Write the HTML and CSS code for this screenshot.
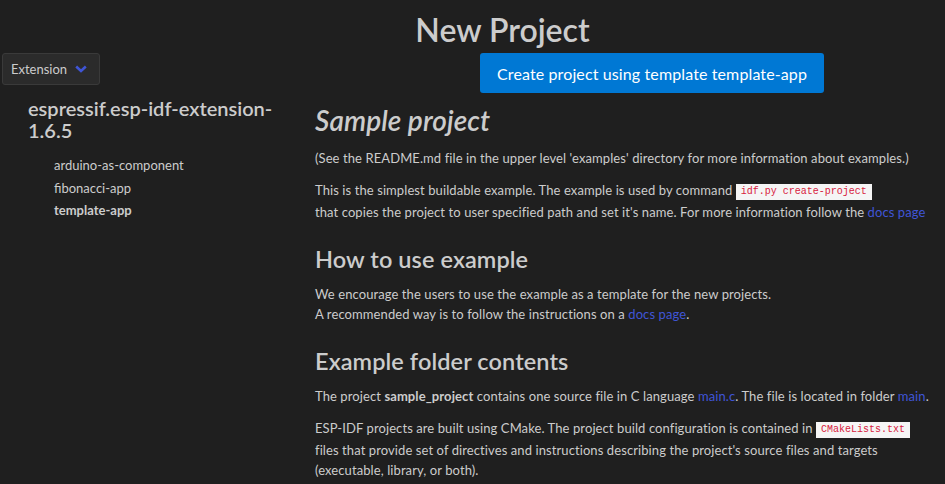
FILE: index.html
```html
<!DOCTYPE html>
<html lang="en">
<head>
<meta charset="utf-8">
<title>New Project</title>
<link rel="stylesheet" href="styles.css">
</head>
<body>
<h1 class="title">New Project</h1>
<div class="layout">
  <aside class="sidebar">
    <button class="dropdown"><span>Extension</span>
      <svg class="chev" width="12" height="8" viewBox="0 0 12 8"><path d="M1.2 1.5 L6 6 L10.8 1.5" fill="none" stroke="#3f55d6" stroke-width="2.6"/></svg>
    </button>
    <h2 class="ext-name">espressif.esp-idf-extension-1.6.5</h2>
    <ul class="templates">
      <li>arduino-as-component</li>
      <li>fibonacci-app</li>
      <li class="active">template-app</li>
    </ul>
  </aside>
  <main class="content">
    <div class="actions">
      <button class="create">Create project using template template-app</button>
    </div>
    <h2 class="sample">Sample project</h2>
    <p>(See the README.md file in the upper level 'examples' directory for more information about examples.)</p>
    <p>This is the simplest buildable example. The example is used by command <code>idf.py create-project</code><br>that copies the project to user specified path and set it's name. For more information follow the <a href="#">docs page</a></p>
    <h3>How to use example</h3>
    <p>We encourage the users to use the example as a template for the new projects.<br>A recommended way is to follow the instructions on a <a href="#">docs page</a>.</p>
    <h3>Example folder contents</h3>
    <p>The project <strong>sample_project</strong> contains one source file in C language <a href="#">main.c</a>. The file is located in folder <a href="#">main</a>.</p>
    <p>ESP-IDF projects are built using CMake. The project build configuration is contained in <code>CMakeLists.txt</code><br>files that provide set of directives and instructions describing the project's source files and targets<br>(executable, library, or both).</p>
  </main>
</div>
</body>
</html>
```

FILE: styles.css
```css
html, body {
  margin: 0;
  padding: 0;
  background: #1f1f1f;
  color: #cccccc;
  font-family: "Lato", "Open Sans", sans-serif;
  font-size: 13px;
  overflow: hidden;
}

.title {
  margin: 0;
  padding: 8px 0 0 60px;
  height: 45px;
  box-sizing: border-box;
  text-align: center;
  font-size: 32px;
  font-weight: 600;
  line-height: 44px;
  color: #cccccc;
}

.layout {
  display: grid;
  grid-template-columns: 315px 1fr;
}

.sidebar {
  padding-left: 2px;
}

.dropdown {
  display: flex;
  align-items: center;
  gap: 8px;
  height: 32px;
  margin-top: 8px;
  padding: 0 0 0 8px;
  width: 98px;
  box-sizing: border-box;
  background: #2b2b2b;
  border: 1px solid #3a3a3a;
  border-radius: 3px;
  color: #cccccc;
  font-family: inherit;
  font-size: 13px;
}

.chev {
  display: block;
  flex-shrink: 0;
}

.ext-name {
  margin: 12px 0 0 26px;
  font-size: 20px;
  font-weight: 600;
  line-height: 22px;
  width: 270px;
  color: #cccccc;
}

.templates {
  list-style: none;
  margin: 13px 0 0 52px;
  padding: 0;
}

.templates li {
  line-height: 22.5px;
}

.templates .active {
  font-weight: 700;
}

.content {
  padding-right: 12px;
  letter-spacing: 0.09px;
}

.actions {
  padding: 8px 0 0 165px;
}

.create {
  height: 40px;
  padding: 0 17px;
  background: #0078d4;
  border: none;
  border-radius: 3px;
  color: #ffffff;
  font-family: inherit;
  font-size: 16px;
  letter-spacing: 0.12px;
}

.sample {
  margin: 7px 0 0;
  font-size: 28px;
  font-style: italic;
  font-weight: 600;
  line-height: 40px;
}

h3 {
  margin: 22px 0 0;
  font-size: 23.5px;
  font-weight: 600;
  line-height: 30px;
}

p {
  margin: 12px 0 0;
  line-height: 20px;
}

.sample + p {
  margin-top: 8px;
}

h3 + p {
  margin-top: 10px;
}

a {
  color: #3f55d6;
  text-decoration: none;
}

strong {
  font-weight: 700;
}

code {
  display: inline-block;
  background: #f5f5f5;
  color: #d81b40;
  font-family: "Liberation Mono", monospace;
  font-size: 10px;
  line-height: 16px;
  padding: 0 5px;
  margin: 2px 0;
  vertical-align: 1px;
  letter-spacing: 0;
}
```
